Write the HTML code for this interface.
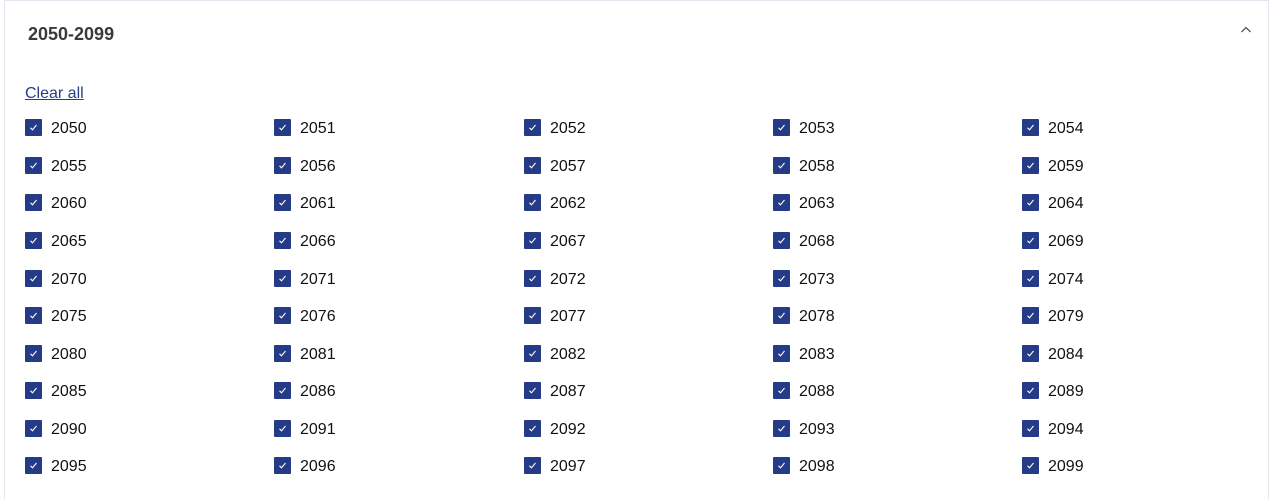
<!DOCTYPE html><html><head><style>
html,body{margin:0;background:#fff;font-family:"Liberation Sans",sans-serif;width:1273px;height:499px;overflow:hidden;position:relative}
.box{position:absolute;left:4px;top:0;width:1265px;height:499px;border:1px solid #e3e6ee;border-bottom:none;box-sizing:border-box}
.t{position:absolute;left:28px;top:24px;font-size:18px;font-weight:bold;color:#3a3a3a}
.car{position:absolute;left:1240px;top:25px}
.clr{position:absolute;left:25px;top:85px;font-size:16px;color:#263c8c;text-decoration:underline}
.i{position:absolute;height:18px;font-size:16px;color:#111;line-height:18px}
.cb{position:absolute;left:0;top:0;width:17px;height:17px;background:#253b87;border-radius:1px}
.i span{position:absolute;left:26px;top:1px}
</style></head><body><div class="box"></div>
<div class="t">2050-2099</div>
<svg class="car" width="12" height="10"><path d="M1.5 7 L6 2.5 L10.5 7" fill="none" stroke="#555" stroke-width="1.3"/></svg>
<div class="clr">Clear all</div>
<div id="g"></div>
<script>
var ys=[119,157,194,232,270,307,345,382,420,457],xs=[25,274,524,773,1022],h='';
for(var r=0;r<10;r++)for(var c=0;c<5;c++){h+='<div class="i" style="left:'+xs[c]+'px;top:'+ys[r]+'px"><div class="cb"><svg width="17" height="17"><path d="M5.5 8.8 L7.5 10.8 L11.5 6" fill="none" stroke="#fff" stroke-width="1.1"/></svg></div><span>'+(2050+r*5+c)+'</span></div>';}
document.getElementById('g').innerHTML=h;
</script></body></html>
